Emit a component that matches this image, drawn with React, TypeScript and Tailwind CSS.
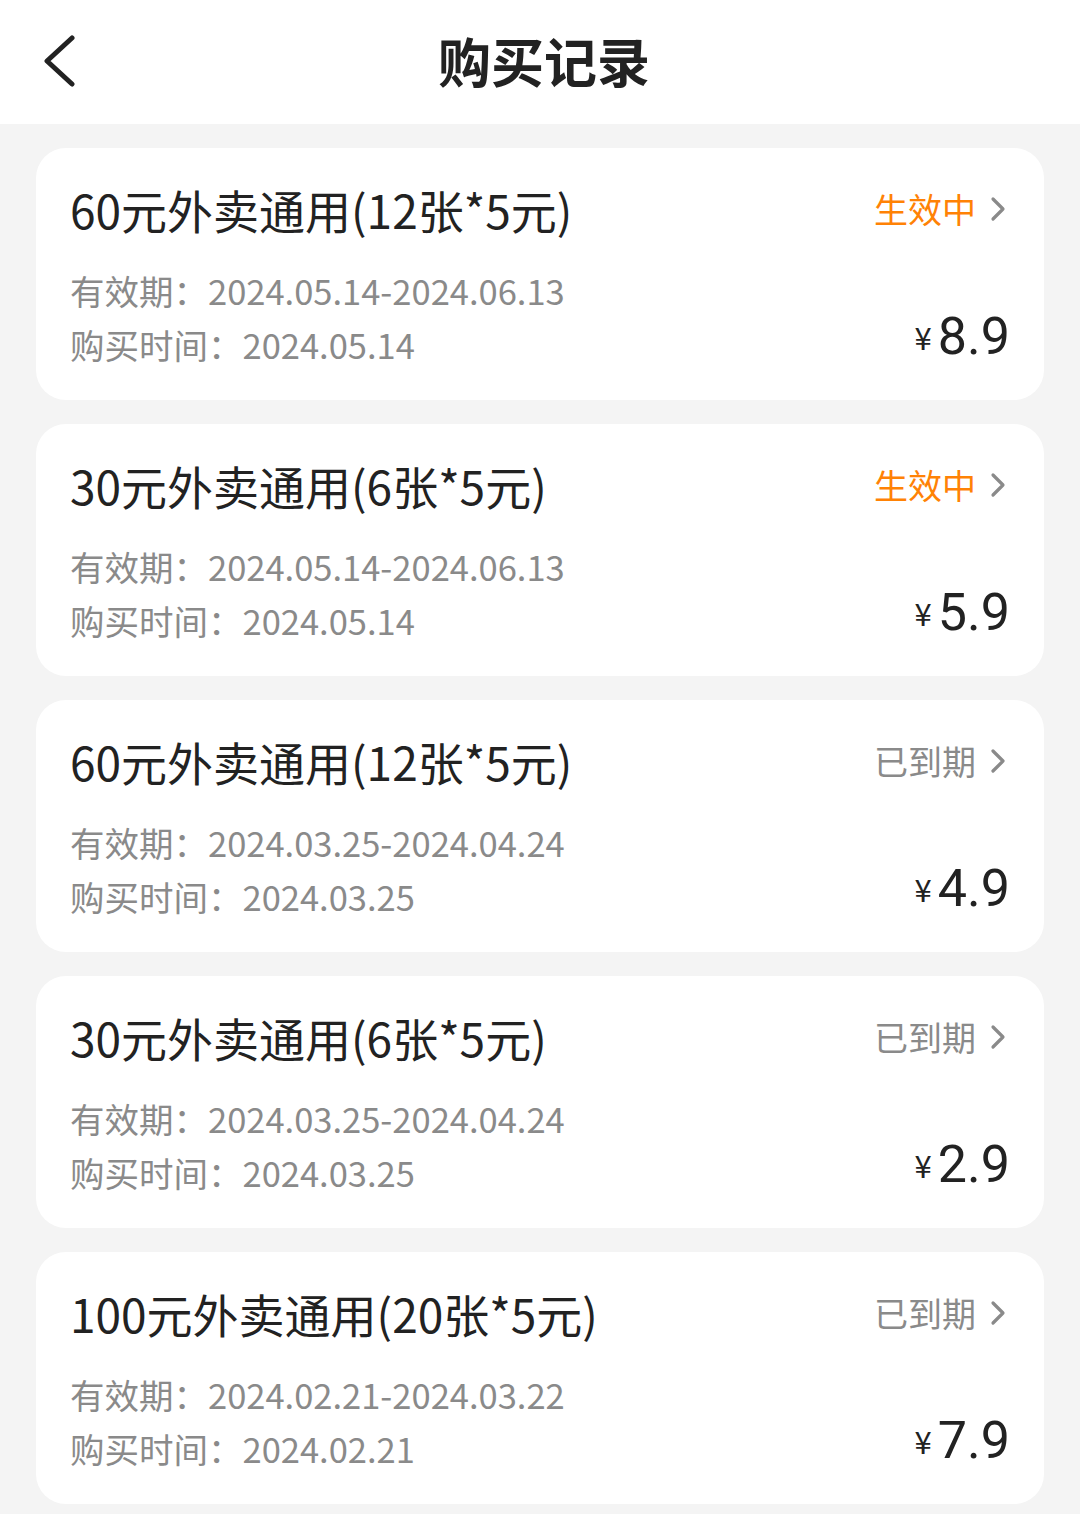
import React from "react";

type Record = {
  title: string;
  period: string;
  bought: string;
  price: string;
  active: boolean;
};

const records: Record[] = [
  { title: "60元外卖通用(12张*5元)", period: "2024.05.14-2024.06.13", bought: "2024.05.14", price: "8.9", active: true },
  { title: "30元外卖通用(6张*5元)", period: "2024.05.14-2024.06.13", bought: "2024.05.14", price: "5.9", active: true },
  { title: "60元外卖通用(12张*5元)", period: "2024.03.25-2024.04.24", bought: "2024.03.25", price: "4.9", active: false },
  { title: "30元外卖通用(6张*5元)", period: "2024.03.25-2024.04.24", bought: "2024.03.25", price: "2.9", active: false },
  { title: "100元外卖通用(20张*5元)", period: "2024.02.21-2024.03.22", bought: "2024.02.21", price: "7.9", active: false },
];

function Chevron() {
  return (
    <svg width="16" height="26" viewBox="0 0 16 26" fill="none" className="ml-[14px] mr-[2px]">
      <path d="M3 3 L13 13 L3 23" stroke="#8a8a8a" strokeWidth="3.2" strokeLinecap="round" strokeLinejoin="round" />
    </svg>
  );
}

function RecordCard({ r }: { r: Record }) {
  return (
    <div className="flex justify-between rounded-[30px] bg-white pl-[34px] pr-[36px] pt-[31px] pb-[29px]">
      <div className="flex flex-col">
        <div className="text-[46px] leading-[60px] text-[#222]">{r.title}</div>
        <div className="mt-[24px] text-[34.5px] leading-[54px] text-[#8a8a8a]">有效期：{r.period}</div>
        <div className="text-[34.5px] leading-[54px] text-[#8a8a8a]">购买时间：{r.bought}</div>
      </div>
      <div className="flex flex-col items-end justify-between">
        <div className="flex h-[60px] items-center">
          <span className={`text-[34px] leading-none ${r.active ? "text-[#ff8205]" : "text-[#8a8a8a]"}`}>
            {r.active ? "生效中" : "已到期"}
          </span>
          <Chevron />
        </div>
        <div className="-mr-[2px] mb-[8px] flex items-baseline text-[#222]">
          <span className="relative -top-[4px] mr-[6px] text-[31px] leading-none">¥</span>
          <span className="font-['Roboto'] text-[52px] leading-none">{r.price}</span>
        </div>
      </div>
    </div>
  );
}

export default function App() {
  return (
    <div
      className="min-h-[1514px] w-[1080px] bg-[#f4f4f4]"
      style={{ fontFamily: '"Noto Sans CJK SC", "Noto Sans", sans-serif' }}
    >
      <header className="relative flex h-[124px] items-center justify-center bg-white pb-[4px] pl-[8px]">
        <svg
          width="34"
          height="52"
          viewBox="0 0 34 52"
          fill="none"
          className="absolute left-[42px] top-[35px]"
        >
          <path d="M30 3 L5 26 L30 49" stroke="#222" strokeWidth="5" strokeLinecap="round" strokeLinejoin="round" />
        </svg>
        <h1 className="text-[53px] font-bold leading-none text-[#222]">购买记录</h1>
      </header>
      <main className="flex flex-col gap-[24px] px-[36px] pt-[24px] pb-[10px]">
        {records.map((r, i) => (
          <RecordCard key={i} r={r} />
        ))}
      </main>
    </div>
  );
}
